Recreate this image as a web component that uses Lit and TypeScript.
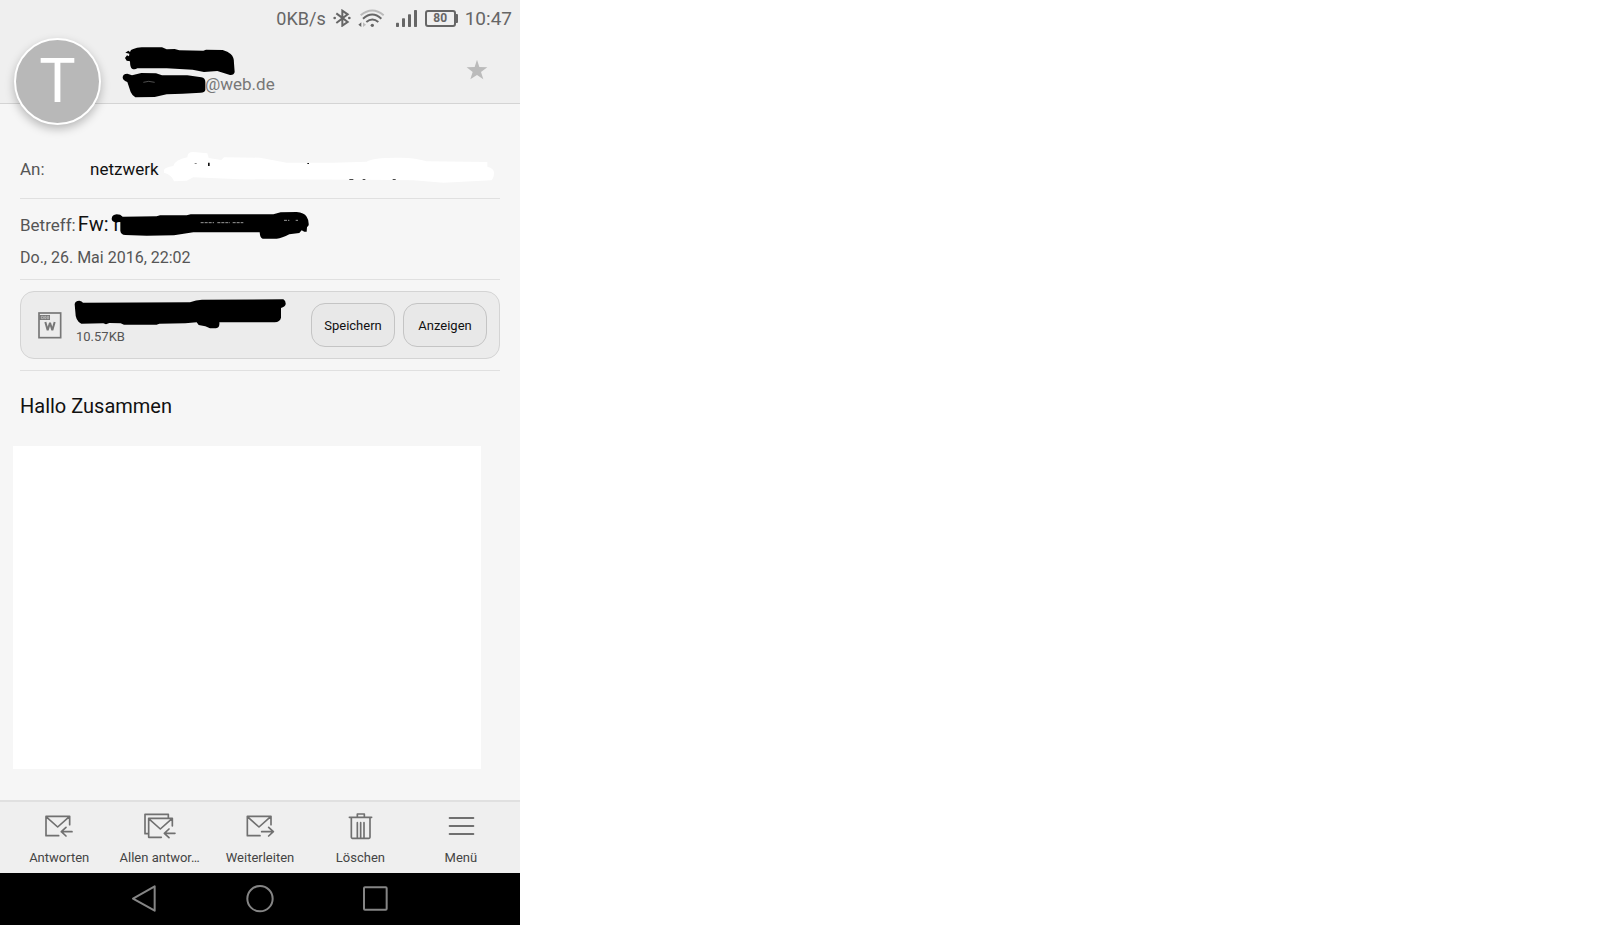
import { LitElement, html, svg, css } from "lit";
import { customElement } from "lit/decorators.js";

const actions = [
  {
    label: "Antworten",
    box: "129 66 96 84",
    icon: svg`<path d="M176 137H138V79H209V104M138 80L173 111L208 80M216 125H184M198 112L184 125L198 138"/>`,
  },
  {
    label: "Allen antwor…",
    box: "432 66 96 84",
    icon: svg`<path d="M445 131H435V73H505V84M484 142H446V85H517V108M446 86L481 117L516 86M525 130H493M507 117L493 130L507 143"/>`,
  },
  {
    label: "Weiterleiten",
    box: "732 66 96 84",
    icon: svg`<path d="M780 137H742V79H813V104M742 80L777 111L812 80M785 125H819M806 112L820 125L806 138"/>`,
  },
  {
    label: "Löschen",
    box: "252 66 96 84",
    icon: svg`<path d="M268 82H335M292 82V72H313V82M274 82V142Q274 145 277 145H327Q330 145 330 142V82M292 98V145M302 98V145M312 98V145"/>`,
  },
  {
    label: "Menü",
    box: "555 66 96 84",
    icon: svg`<path stroke-width="6" d="M569 84H640M569 108H640M569 132H640"/>`,
  },
];

@customElement("status-bar")
class StatusBar extends LitElement {
  static styles = css`
    :host {
      display: flex;
      align-items: center;
      justify-content: flex-end;
      gap: 7px;
      height: 36px;
      padding-right: 8px;
      color: #666;
      font-size: 19px;
    }
    .speed {
      font-size: 18px;
    }
    .wifi {
      margin-right: 3px;
    }
    .battery {
      display: flex;
      align-items: center;
    }
    .level {
      box-sizing: border-box;
      width: 31px;
      height: 17px;
      border: 2px solid #666;
      border-radius: 3px;
      font-size: 12px;
      font-weight: 700;
      line-height: 13px;
      text-align: center;
    }
    .nub {
      width: 2px;
      height: 9px;
      background: #666;
      border-radius: 0 1px 1px 0;
    }
  `;
  render() {
    return html`
      <span class="speed">0KB/s</span>
      <svg width="18" height="18" viewBox="222 24 54 54" fill="none" stroke="#666" stroke-width="6">
        <path d="M232 37L266 63L250 74V29L266 40L232 66" />
        <circle cx="227" cy="51" r="4" fill="#666" stroke="none" />
        <circle cx="271" cy="51" r="4" fill="#666" stroke="none" />
      </svg>
      <svg class="wifi" width="27" height="18" viewBox="294 24 81 54" fill="none" stroke-width="6">
        <path stroke="#bbb" d="M302 43Q337 14 371 43" />
        <path stroke="#666" d="M309 53Q337 28 364 53M319 63Q337 48 355 63" />
        <circle cx="337" cy="73" r="5" fill="#666" />
        <path fill="#666" d="M295 71L304 64V78Z" />
        <path fill="#bbb" d="M318 71L309 64V78Z" />
      </svg>
      <svg width="23" height="18" viewBox="405 24 69 54" fill="#666">
        <rect x="408" y="65" width="9" height="13" rx="2" />
        <rect x="426" y="52" width="9" height="26" rx="2" />
        <rect x="444" y="40" width="9" height="38" rx="2" />
        <rect x="462" y="27" width="9" height="51" rx="2" />
      </svg>
      <span class="battery"><span class="level">80</span><span class="nub"></span></span>
      <span>10:47</span>
    `;
  }
}

@customElement("app-root")
class AppRoot extends LitElement {
  static styles = css`
    :host {
      display: block;
      min-height: 100vh;
      background: #fff;
      font-family: Roboto, "Liberation Sans", sans-serif;
    }
    * {
      box-sizing: border-box;
    }
    button {
      font-family: inherit;
      padding: 0;
      border: 0;
      background: none;
    }
    svg {
      display: block;
    }
    .phone {
      display: flex;
      flex-direction: column;
      max-width: 520px;
      min-height: 100vh;
      background: #f6f6f6;
    }
    .head {
      position: relative;
      background: #efefef;
      border-bottom: 1px solid #d4d4d4;
    }
    .avatar {
      position: absolute;
      left: 14px;
      top: 38px;
      width: 87px;
      height: 87px;
      border: 2px solid #fff;
      border-radius: 50%;
      background: #b8b8b8;
      box-shadow: 0 4px 10px rgba(0, 0, 0, 0.25);
      color: #fff;
      font-size: 61px;
      line-height: 83px;
      text-align: center;
    }
    .from {
      display: flex;
      align-items: flex-start;
      justify-content: space-between;
      height: 67px;
      padding: 10px 32px 0 122px;
    }
    .sender {
      position: relative;
      padding: 27px 0 0 83px;
      color: #777;
      font-size: 17px;
      line-height: 22px;
    }
    .ink {
      position: absolute;
    }
    .sender .ink {
      left: 0;
      top: 0;
    }
    .star {
      margin-top: 13px;
    }
    .mail {
      display: flex;
      flex-direction: column;
      flex: 1;
    }
    .row {
      position: relative;
      margin: 0 20px;
      border-bottom: 1px solid #e0e0e0;
      color: #555;
      font-size: 17px;
    }
    .to {
      display: flex;
      padding: 55px 0 19px;
      line-height: 20px;
    }
    .to dt {
      width: 70px;
    }
    dl,
    dd {
      margin: 0;
    }
    .to .ink {
      left: 143px;
      top: 47px;
    }
    .about {
      padding: 13px 0 11px;
    }
    .subject {
      display: flex;
      align-items: baseline;
      gap: 2px;
      line-height: 24px;
    }
    .about .ink {
      left: 91px;
      top: 11px;
    }
    .strong {
      color: #111;
    }
    .title {
      font-size: 20px;
    }
    time {
      display: block;
      margin-top: 11px;
      font-size: 16px;
      line-height: 20px;
    }
    .attach {
      padding: 11px 0;
    }
    .card {
      position: relative;
      display: flex;
      align-items: center;
      gap: 8px;
      height: 68px;
      padding: 0 12px 0 17px;
      border: 1px solid #d4d4d4;
      border-radius: 14px;
      background: #ececec;
    }
    .card .ink {
      left: 53px;
      top: 6px;
    }
    .size {
      flex: 1;
      margin-left: 6px;
      padding-top: 24px;
      font-size: 13px;
      line-height: 16px;
    }
    .pill {
      width: 84px;
      height: 44px;
      border: 1px solid #c4c4c4;
      border-radius: 14px;
      background: #e8e8e8;
      color: #111;
      font-size: 13px;
    }
    .greeting {
      margin: 21px 20px 26px;
      color: #111;
      font-size: 20px;
      line-height: 28px;
    }
    .blank {
      flex: 1;
      margin: 0 39px 31px 13px;
      background: #fff;
    }
    .tools {
      display: flex;
      padding: 10px 9px 6px;
      border-top: 2px solid #e0e0e0;
      background: #efefef;
    }
    .tool {
      display: flex;
      flex: 1;
      flex-direction: column;
      align-items: center;
      gap: 10px;
      padding-bottom: 1px;
      color: #444;
      font-size: 13px;
      line-height: 16px;
    }
    .nav {
      display: flex;
      justify-content: center;
      height: 52px;
      background: #000;
    }
    .key {
      display: grid;
      place-items: center;
      width: 116px;
    }
  `;

  render() {
    return html`
      <main class="phone">
        <header class="head">
          <status-bar></status-bar>
          <div class="from">
            <div class="sender">
              @web.de
              <svg class="ink" width="114" height="52" viewBox="366 138 342 156">
                <path d="M376 158L385 152L390 156Q391 149 400 147Q412 141 430 142L486 142L500 148L524 147L538 151L610 152L618 149L668 150Q684 154 692 162Q703 172 702 190L704 216Q702 226 690 225L652 213L612 216L578 209L500 205L412 205Q404 210 396 206Q390 203 390 184L380 182L375 174L381 166L387 169L388 161Z" />
                <path d="M368 233Q368 221 382 221L396 226L424 219L468 220L486 226L562 226L604 232Q616 234 616 246V270Q614 278 602 278L548 281L500 283L464 291L406 292Q398 289 392 276L382 246Q370 242 368 233Z" />
                <path d="M430 247L446 244L464 247" stroke="#777" stroke-width="2" fill="none" />
              </svg>
            </div>
            <button class="star" aria-label="Favorit">
              <svg width="22" height="22" viewBox="618 177 66 66" fill="#bbb">
                <path d="M651 179L658 201L682 202L663 216L670 238L651 225L631 238L638 216L620 202L644 201Z" />
              </svg>
            </button>
          </div>
          <div class="avatar">T</div>
        </header>

        <section class="mail">
          <dl class="row to">
            <dt>An:</dt>
            <dd class="strong">netzwerk</dd>
            <svg class="ink" width="332" height="33" viewBox="489 33 996 99" fill="#fff">
              <path d="M492 90Q494 82 520 78Q524 60 562 52Q562 36 580 36L622 40L626 54L664 60L672 52L780 53L860 68L1000 68L1100 65Q1120 52 1200 53Q1250 54 1280 64L1462 66L1462 80Q1482 84 1482 98Q1482 114 1474 121L1330 128L1240 121L1100 119L720 118L580 112L560 122L522 124Q516 104 492 98Z" />
              <path fill="#111" d="M624 68H629V78H624ZM922 69H927V72H922ZM1048 117H1060V119H1048ZM1088 117H1096V119H1088ZM1178 117H1187V119H1178ZM584 70H590V71H584Z" />
            </svg>
          </dl>

          <div class="row about">
            <div class="subject">
              <span>Betreff:</span><span class="strong title">Fw: n</span>
            </div>
            <svg class="ink" width="199" height="30" viewBox="333 210 597 90">
              <path d="M335 236Q336 224 350 223Q362 223 368 230L470 229L480 226L560 226L572 223L820 223L842 217L890 216Q912 218 920 230Q927 240 926 256L921 262L920 275L913 275L905 271L898 279L868 283Q846 295 830 296H788Q780 294 779 277L580 277L522 286L440 287L376 285Q362 284 361 272V246L346 247Q335 244 335 236Z" />
              <path d="M602 248H642M652 248H690M698 248H730M852 241H868M887 241H894" stroke="#999" stroke-width="3" stroke-dasharray="9 3" fill="none" />
            </svg>
            <time datetime="2016-05-26T22:02">Do., 26. Mai 2016, 22:02</time>
          </div>

          <div class="row attach">
            <div class="card">
              <svg width="24" height="27" viewBox="113 110 72 81" fill="none" stroke="#777" stroke-width="5">
                <rect x="116" y="113" width="65" height="74" />
                <path fill="#777" stroke="none" d="M117 119H149V134H117Z" />
                <path stroke="#ccc" stroke-width="2" d="M123 123H129V130H123ZM133 123H137V130H133ZM145 123H141V130H145Z" />
                <path stroke-width="6" stroke-linejoin="bevel" d="M135 140L142 165L149 142L156 165L163 140" />
              </svg>
              <span class="size">10.57KB</span>
              <button class="pill">Speichern</button>
              <button class="pill">Anzeigen</button>
              <svg class="ink" width="213" height="32" viewBox="222 69 639 96">
                <path d="M224 88Q225 77 238 77Q246 78 249 83L570 82Q588 74 606 74L850 73Q858 78 857 88Q855 96 843 99V128Q840 141 824 142L658 142Q660 158 648 160H630L616 154L596 150L590 142L556 145L478 146L470 149H372L362 145L328 144L318 148L310 145L244 146Q226 138 226 110Z" />
              </svg>
            </div>
          </div>

          <p class="greeting">Hallo Zusammen</p>
          <div class="blank"></div>
        </section>

        <footer>
          <div class="tools">
            ${actions.map(
              (a) => html`
                <button class="tool">
                  <svg width="32" height="28" viewBox=${a.box} fill="none" stroke="#707070" stroke-width="5" stroke-linejoin="round" stroke-linecap="round">
                    ${a.icon}
                  </svg>
                  <span>${a.label}</span>
                </button>
              `
            )}
          </div>
          <nav class="nav">
            <button class="key" aria-label="Zurück">
              <svg width="28" height="28" viewBox="0 0 84 84" fill="none" stroke="#858585" stroke-width="6" stroke-linejoin="round">
                <path d="M9 41L74 4V77Z" />
              </svg>
            </button>
            <button class="key" aria-label="Start">
              <svg width="28" height="28" viewBox="0 0 84 84" fill="none" stroke="#858585" stroke-width="6">
                <circle cx="42" cy="41" r="38" />
              </svg>
            </button>
            <button class="key" aria-label="Übersicht">
              <svg width="28" height="28" viewBox="0 0 84 84" fill="none" stroke="#858585" stroke-width="6">
                <rect x="6" y="7" width="68" height="67" rx="3" />
              </svg>
            </button>
          </nav>
        </footer>
      </main>
    `;
  }
}
